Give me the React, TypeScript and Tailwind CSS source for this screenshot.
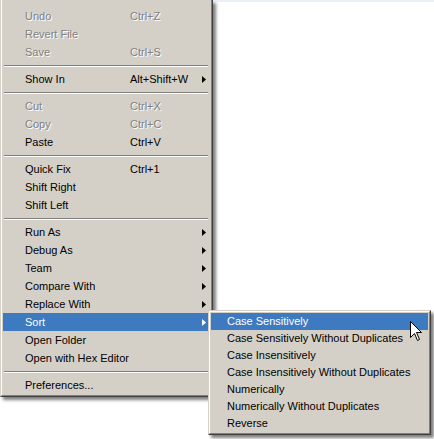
import React from "react";

type Item =
	| { sep: true }
	| { sep?: false; label: string; key?: string; disabled?: boolean; sub?: boolean; active?: boolean };

const mainItems: Item[] = [
	{ label: "Undo", key: "Ctrl+Z", disabled: true },
	{ label: "Revert File", disabled: true },
	{ label: "Save", key: "Ctrl+S", disabled: true },
	{ sep: true },
	{ label: "Show In", key: "Alt+Shift+W", sub: true },
	{ sep: true },
	{ label: "Cut", key: "Ctrl+X", disabled: true },
	{ label: "Copy", key: "Ctrl+C", disabled: true },
	{ label: "Paste", key: "Ctrl+V" },
	{ sep: true },
	{ label: "Quick Fix", key: "Ctrl+1" },
	{ label: "Shift Right" },
	{ label: "Shift Left" },
	{ sep: true },
	{ label: "Run As", sub: true },
	{ label: "Debug As", sub: true },
	{ label: "Team", sub: true },
	{ label: "Compare With", sub: true },
	{ label: "Replace With", sub: true },
	{ label: "Sort", sub: true, active: true },
	{ label: "Open Folder" },
	{ label: "Open with Hex Editor" },
	{ sep: true },
	{ label: "Preferences..." },
];

const sortItems = [
	"Case Sensitively",
	"Case Sensitively Without Duplicates",
	"Case Insensitively",
	"Case Insensitively Without Duplicates",
	"Numerically",
	"Numerically Without Duplicates",
	"Reverse",
];

const Arrow = ({ white }: { white?: boolean }) => (
	<svg width="4" height="7" viewBox="0 0 4 7" className="block">
		<polygon points="0,0 4,3.5 0,7" fill={white ? "#ffffff" : "#000000"} />
	</svg>
);

const Separator = () => (
	<div className="h-[9px] flex flex-col justify-center px-[1px]">
		<div className="h-px bg-[#808080]" />
		<div className="h-px bg-white" />
	</div>
);

const MenuRow = ({ item }: { item: Extract<Item, { label: string }> }) => {
	const dim = "text-[#808080] text-shadow-[1px_1px_0_#ffffff]";
	return (
		<div
			className={
				"h-[18px] flex items-center pl-[22px] pr-[3px] " +
				(item.active ? "bg-[#3d7abf] text-white" : item.disabled ? dim : "text-black")
			}
		>
			<span className="w-[105px] whitespace-nowrap">{item.label}</span>
			<span className="flex-1 whitespace-nowrap">{item.key}</span>
			{item.sub && <Arrow white={item.active} />}
		</div>
	);
};

export default function App() {
	return (
		<div
			className="relative w-[434px] h-[439px] overflow-hidden bg-[linear-gradient(to_bottom,#eaf1fb_2px,#ffffff_2px)] text-[11px] leading-none"
			style={{ fontFamily: '"Liberation Sans", Arial, sans-serif' }}
		>
			{/* main context menu */}
			<div className="w-[213px] bg-[#d4d0c8] border-l border-r border-b border-l-[#d4d0c8] border-r-[#404040] border-b-[#404040] shadow-[3px_3px_3px_rgba(0,0,0,0.5)]">
				<div className="border-l border-r border-b border-l-white border-r-[#808080] border-b-[#808080] pt-[7px] pb-px pl-px pr-[2px]">
					{mainItems.map((item, i) =>
						item.sep ? <Separator key={i} /> : <MenuRow key={i} item={item} />
					)}
				</div>
			</div>

			{/* Sort submenu */}
			<div className="absolute left-[208px] top-[310px] w-[223px] bg-[#d4d0c8] border border-t-[#d4d0c8] border-l-[#d4d0c8] border-r-[#404040] border-b-[#404040] shadow-[3px_3px_3px_rgba(0,0,0,0.5)]">
				<div className="border border-t-white border-l-white border-r-[#808080] border-b-[#808080] p-px">
					{sortItems.map((label, i) => (
						<div
							key={label}
							className={
								"h-[17px] flex items-center pl-[16px] whitespace-nowrap " +
								(i === 0 ? "bg-[#3d7abf] text-white" : "text-black")
							}
						>
							{label}
						</div>
					))}
				</div>
			</div>

			{/* mouse pointer */}
			<svg className="absolute left-[410px] top-[321px]" width="13" height="21" viewBox="0 0 13 21">
				<path
					d="M0.5 0.5 L0.5 16.5 L4.5 12.5 L7.5 19.5 L9.5 18.5 L6.5 11.5 L11.5 11.5 Z"
					fill="#ffffff"
					stroke="#000000"
					strokeWidth="1"
					strokeLinejoin="miter"
				/>
			</svg>
		</div>
	);
}
